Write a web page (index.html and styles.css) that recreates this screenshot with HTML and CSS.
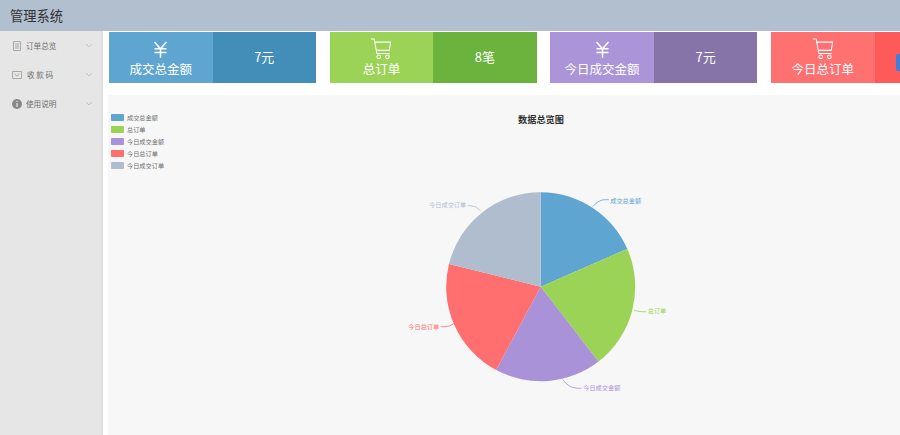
FILE: index.html
```html
<!DOCTYPE html>
<html lang="zh">
<head>
<meta charset="utf-8">
<title>管理系统</title>
<link rel="stylesheet" href="styles.css">
</head>
<body>
<svg class="defs" width="0" height="0" aria-hidden="true">
  <symbol id="yen" viewBox="0 0 20 22"><path d="M2 1l8 9 8-9M2 10h16M2 15h16M10 10v12" fill="none" stroke="currentColor" stroke-width="2"/></symbol>
  <symbol id="cart" viewBox="0 0 24 24"><g fill="none" stroke="currentColor" stroke-width="1.1"><path d="M1 1h3.5l3 16h14"/><path d="M5 4.5h17.5l-1.5 9H6.8"/><circle cx="9.5" cy="20.5" r="2"/><circle cx="19" cy="20.5" r="2"/></g></symbol>
</svg>
<header class="topbar">管理系统</header>
<div class="layout">
  <nav class="sidebar">
    <div class="nav-item">
      <svg class="nav-icon" viewBox="0 0 10 10"><path d="M1.5.5h7v9h-7zM3 3h4M3 5h4M3 7h4" fill="none" stroke="#999" stroke-width=".8"/></svg>
      <span class="nav-label">订单总览</span>
      <svg class="chev" viewBox="0 0 8 5"><path d="M1 1l3 3 3-3" fill="none" stroke="#c4c4c4"/></svg>
    </div>
    <div class="nav-item">
      <svg class="nav-icon" viewBox="0 0 10 10"><path d="M.5 1.5h9v7h-9zM2.5 4l2.5 2 2.5-2" fill="none" stroke="#999" stroke-width=".8"/></svg>
      <span class="nav-label wide">收 款 码</span>
      <svg class="chev" viewBox="0 0 8 5"><path d="M1 1l3 3 3-3" fill="none" stroke="#c4c4c4"/></svg>
    </div>
    <div class="nav-item">
      <svg class="nav-icon" viewBox="0 0 10 10"><circle cx="5" cy="5" r="5" fill="#888"/><path d="M5 4v4M5 2v1" stroke="#e6e6e6" stroke-width="1.2"/></svg>
      <span class="nav-label">使用说明</span>
      <svg class="chev" viewBox="0 0 8 5"><path d="M1 1l3 3 3-3" fill="none" stroke="#c4c4c4"/></svg>
    </div>
  </nav>
  <main class="content">
    <section class="cards">
      <div class="card blue">
        <div class="card-left"><svg class="icon yen"><use href="#yen"/></svg><span>成交总金额</span></div>
        <div class="card-right">7元</div>
      </div>
      <div class="card green">
        <div class="card-left"><svg class="icon"><use href="#cart"/></svg><span>总订单</span></div>
        <div class="card-right">8笔</div>
      </div>
      <div class="card purple">
        <div class="card-left"><svg class="icon yen"><use href="#yen"/></svg><span>今日成交金额</span></div>
        <div class="card-right">7元</div>
      </div>
      <div class="card red">
        <div class="card-left"><svg class="icon"><use href="#cart"/></svg><span>今日总订单</span></div>
        <div class="card-right"><span class="edge-badge"></span></div>
      </div>
    </section>
    <section class="panel">
      <ul class="legend">
        <li><i class="swatch s1"></i>成交总金额</li>
        <li><i class="swatch s2"></i>总订单</li>
        <li><i class="swatch s3"></i>今日成交金额</li>
        <li><i class="swatch s4"></i>今日总订单</li>
        <li><i class="swatch s5"></i>今日成交订单</li>
      </ul>
      <h2 class="chart-title">数据总览图</h2>
      <svg class="pie" viewBox="0 0 792 340" width="792" height="340">
        <g transform="translate(432.7 191.7)">
          <path d="M0 0V-94.5A94.5 94.5 0 0 1 86.6 -37.8Z" fill="#5fa5d1"/>
          <path d="M0 0L86.6 -37.8A94.5 94.5 0 0 1 57.8 74.8Z" fill="#9bd356"/>
          <path d="M0 0L57.8 74.8A94.5 94.5 0 0 1 -44.6 83.3Z" fill="#a992d8"/>
          <path d="M0 0L-44.6 83.3A94.5 94.5 0 0 1 -91.7 -22.8Z" fill="#ff6f70"/>
          <path d="M0 0L-91.7 -22.8A94.5 94.5 0 0 1 0 -94.5Z" fill="#b0bdcf"/>
          <g fill="none" stroke-width=".8">
            <path d="M52 -80Q58 -87 64 -87H68" stroke="#5fa5d1"/>
            <path d="M93.5 23.5Q97 25 102 25H105.500" stroke="#9bd356"/>
            <path d="M22 93Q28 101 36 101.500H41" stroke="#a992d8"/>
            <path d="M-87 37Q-91 40 -96 40H-100" stroke="#ff6f70"/>
            <path d="M-60 -76Q-65 -81 -70 -81H-73" stroke="#b0bdcf"/>
          </g>
          <g class="pie-label">
            <text x="69.500" y="-84" fill="#5fa5d1">成交总金额</text>
            <text x="107" y="26.500" fill="#9bd356">总订单</text>
            <text x="42.500" y="103.500" fill="#a992d8">今日成交金额</text>
            <text x="-101.500" y="42" text-anchor="end" fill="#ff6f70">今日总订单</text>
            <text x="-74.500" y="-80" text-anchor="end" fill="#b0bdcf">今日成交订单</text>
          </g>
        </g>
      </svg>
    </section>
  </main>
</div>
</body>
</html>
```
FILE: styles.css
```css
* { box-sizing: border-box; }
html, body { margin: 0; height: 100%; overflow: hidden; }
body { font-family: "Noto Sans CJK SC", "Liberation Sans", sans-serif; background: #fff; color: #333; }
.defs { position: absolute; }
.topbar { height: 31px; background: #b2bfcf; color: #333; font-size: 13.250px; line-height: 31px; padding-left: 10px; }
.layout { display: flex; height: 404px; }
.sidebar { width: 103px; flex: none; background: #e6e6e6; border-right: 2px solid #dfdfdf; }
.nav-item { height: 29px; display: flex; align-items: center; padding: 0 8px 0 12px; }
.nav-icon { width: 10px; height: 10px; flex: none; }
.nav-label { font-size: 7.600px; color: #707070; margin-left: 4px; flex: 1; }
.nav-label.wide { margin-left: 5px; }
.chev { width: 8px; height: 5px; flex: none; }
.content { flex: 1; min-width: 0; padding: 1px 0 0 5px; overflow: hidden; }
.cards { display: flex; gap: 13.700px; padding-left: 1px; height: 63px; width: 900px; }
.card { width: 207px; height: 51px; display: flex; flex: none; color: #fff; }
.card-left { width: 103.500px; display: flex; flex-direction: column; align-items: center; font-size: 12.500px; line-height: 16px; padding-top: 6px; }
.card-left span { white-space: nowrap; }
.card-left .icon + span { margin-top: 1px; }
.card-right { flex: 1; display: flex; align-items: center; justify-content: center; font-size: 13px; padding-bottom: 2px; }
.icon { width: 22px; height: 22px; display: block; }
.icon.yen { width: 15px; height: 17px; margin: 3px 0 2px; }
.blue .card-left { background: #5fa5d1; } .blue .card-right { background: #438eb9; }
.green .card-left { background: #9bd356; } .green .card-right { background: #6cb33d; }
.purple .card-left { background: #ab94d8; } .purple .card-right { background: #8674a9; }
.red .card-left { background: #ff7070; } .red .card-right { background: #ff5a5a; justify-content: flex-start; padding: 0; }
.edge-badge { display: block; width: 8px; height: 17px; margin-left: 21px; margin-top: 10px; background: #3f7fd6; border-radius: 2px 0 0 2px; }
.panel { position: relative; height: 340px; background: #f7f7f7; }
.legend { list-style: none; margin: 0; padding: 0; position: absolute; left: 3px; top: 16px; font-size: 6.200px; color: #707070; }
.legend li { height: 12.200px; display: flex; align-items: center; white-space: nowrap; }
.swatch { width: 13px; height: 7px; margin-right: 3px; border-radius: 1px; }
.s1 { background: #5fa5d1; } .s2 { background: #9bd356; } .s3 { background: #a992d8; } .s4 { background: #ff6f70; } .s5 { background: #b0bdcf; }
.chart-title { margin: 0; padding: 17px 0 0 74px; text-align: center; font-size: 9.200px; line-height: 14px; font-weight: 700; color: #333; }
.pie { position: absolute; left: 0; top: 0; }
.pie-label { font-size: 6.200px; }
```
